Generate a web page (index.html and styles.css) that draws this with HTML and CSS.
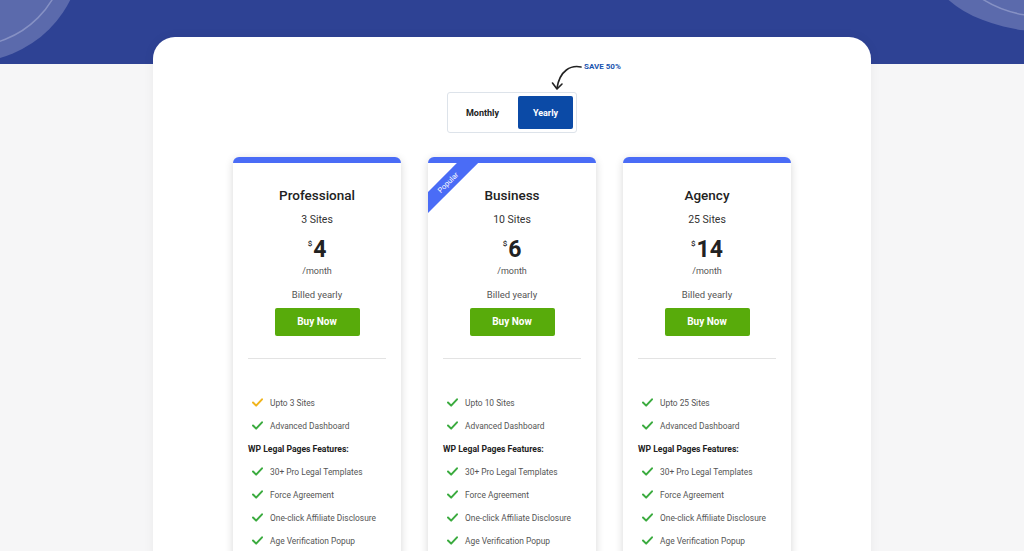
FILE: index.html
```html
<!DOCTYPE html>
<html lang="en">
<head>
  <meta charset="UTF-8">
  <title>WP Legal Pages - Pricing</title>
  <link rel="stylesheet" href="styles.css">
</head>
<body>
  <header class="hero">
    <svg class="blob blob-left" width="160" height="64" viewBox="0 0 160 64">
      <circle cx="-30" cy="-50" r="112" fill="#5b6aac"/>
      <circle cx="-30" cy="-50" r="96" fill="none" stroke="#8691c4" stroke-width="1.5"/>
    </svg>
    <svg class="blob blob-right" width="124" height="64" viewBox="0 0 124 64">
      <ellipse cx="150" cy="-40" rx="122" ry="72" fill="#5b6aac"/>
      <ellipse cx="150" cy="-48" rx="98" ry="65" fill="none" stroke="#8691c4" stroke-width="1.5"/>
    </svg>
  </header>

  <main class="panel">
    <div class="switch-wrap">
      <div class="save">
        <svg class="save-arrow" width="34" height="30" viewBox="0 0 34 30">
          <path d="M31 4 C21 2 10 7 7 25" fill="none" stroke="#222" stroke-width="1.6" stroke-linecap="round"/>
          <path d="M2.5 20 L7 26 L12 21" fill="none" stroke="#222" stroke-width="1.6" stroke-linecap="round" stroke-linejoin="round"/>
        </svg>
        <span>SAVE 50%</span>
      </div>
      <div class="switch">
        <button class="switch-btn">Monthly</button>
        <button class="switch-btn active">Yearly</button>
      </div>
    </div>

    <div class="plans">
      <div class="plan">
        <h2>Professional</h2>
        <p class="sites">3 Sites</p>
        <p class="price"><sup>$</sup>4</p>
        <p class="per">/month</p>
        <p class="billed">Billed yearly</p>
        <a class="buy" href="#">Buy Now</a>
        <hr>
        <ul class="features">
          <li><svg class="check gold" viewBox="0 0 12 10"><path d="M1 5 L4.5 8.5 L11 1.5"/></svg>Upto 3 Sites</li>
          <li><svg class="check" viewBox="0 0 12 10"><path d="M1 5 L4.5 8.5 L11 1.5"/></svg>Advanced Dashboard</li>
          <li class="group">WP Legal Pages Features:</li>
          <li><svg class="check" viewBox="0 0 12 10"><path d="M1 5 L4.5 8.5 L11 1.5"/></svg>30+ Pro Legal Templates</li>
          <li><svg class="check" viewBox="0 0 12 10"><path d="M1 5 L4.5 8.5 L11 1.5"/></svg>Force Agreement</li>
          <li><svg class="check" viewBox="0 0 12 10"><path d="M1 5 L4.5 8.5 L11 1.5"/></svg>One-click Affiliate Disclosure</li>
          <li><svg class="check" viewBox="0 0 12 10"><path d="M1 5 L4.5 8.5 L11 1.5"/></svg>Age Verification Popup</li>
        </ul>
      </div>

      <div class="plan">
        <div class="ribbon"><span>Popular</span></div>
        <h2>Business</h2>
        <p class="sites">10 Sites</p>
        <p class="price"><sup>$</sup>6</p>
        <p class="per">/month</p>
        <p class="billed">Billed yearly</p>
        <a class="buy" href="#">Buy Now</a>
        <hr>
        <ul class="features">
          <li><svg class="check" viewBox="0 0 12 10"><path d="M1 5 L4.5 8.5 L11 1.5"/></svg>Upto 10 Sites</li>
          <li><svg class="check" viewBox="0 0 12 10"><path d="M1 5 L4.5 8.5 L11 1.5"/></svg>Advanced Dashboard</li>
          <li class="group">WP Legal Pages Features:</li>
          <li><svg class="check" viewBox="0 0 12 10"><path d="M1 5 L4.5 8.5 L11 1.5"/></svg>30+ Pro Legal Templates</li>
          <li><svg class="check" viewBox="0 0 12 10"><path d="M1 5 L4.5 8.5 L11 1.5"/></svg>Force Agreement</li>
          <li><svg class="check" viewBox="0 0 12 10"><path d="M1 5 L4.5 8.5 L11 1.5"/></svg>One-click Affiliate Disclosure</li>
          <li><svg class="check" viewBox="0 0 12 10"><path d="M1 5 L4.5 8.5 L11 1.5"/></svg>Age Verification Popup</li>
        </ul>
      </div>

      <div class="plan">
        <h2>Agency</h2>
        <p class="sites">25 Sites</p>
        <p class="price"><sup>$</sup>14</p>
        <p class="per">/month</p>
        <p class="billed">Billed yearly</p>
        <a class="buy" href="#">Buy Now</a>
        <hr>
        <ul class="features">
          <li><svg class="check" viewBox="0 0 12 10"><path d="M1 5 L4.5 8.5 L11 1.5"/></svg>Upto 25 Sites</li>
          <li><svg class="check" viewBox="0 0 12 10"><path d="M1 5 L4.5 8.5 L11 1.5"/></svg>Advanced Dashboard</li>
          <li class="group">WP Legal Pages Features:</li>
          <li><svg class="check" viewBox="0 0 12 10"><path d="M1 5 L4.5 8.5 L11 1.5"/></svg>30+ Pro Legal Templates</li>
          <li><svg class="check" viewBox="0 0 12 10"><path d="M1 5 L4.5 8.5 L11 1.5"/></svg>Force Agreement</li>
          <li><svg class="check" viewBox="0 0 12 10"><path d="M1 5 L4.5 8.5 L11 1.5"/></svg>One-click Affiliate Disclosure</li>
          <li><svg class="check" viewBox="0 0 12 10"><path d="M1 5 L4.5 8.5 L11 1.5"/></svg>Age Verification Popup</li>
        </ul>
      </div>
    </div>
  </main>
</body>
</html>
```

FILE: styles.css
```css
/* Pricing page */
body {
  margin: 0;
  font-family: Roboto, "Liberation Sans", Arial, sans-serif;
  background: #f6f6f7;
  color: #222;
  overflow: hidden;
}
.hero {
  position: relative;
  height: 64px;
  background: #2e4294;
  overflow: hidden;
}
.blob {
  position: absolute;
  top: 0;
}
.blob-left { left: 0; }
.blob-right { right: 0; }

.panel {
  position: relative;
  width: 718px;
  margin: -27px auto 0;
  min-height: 560px;
  background: #fff;
  border-radius: 22px 22px 0 0;
  box-shadow: 0 0 12px rgba(0, 0, 0, 0.05);
  padding-top: 55px;
  box-sizing: border-box;
}

/* Monthly / Yearly switch */
.switch-wrap {
  position: relative;
  width: 130px;
  margin: 0 auto;
}
.switch {
  display: flex;
  align-items: center;
  height: 41px;
  padding: 3px;
  box-sizing: border-box;
  border: 1px solid #dde3ea;
  border-radius: 3px;
  background: #fff;
}
.switch-btn {
  flex: 1;
  height: 33px;
  border: none;
  background: none;
  font-family: inherit;
  font-size: 9px;
  font-weight: 700;
  color: #222;
  border-radius: 2px;
  padding: 0 4px 0 0;
}
.switch-btn.active {
  flex: 0 0 55px;
  padding: 0;
  background: #0b4aa6;
  color: #fff;
}
.save {
  position: absolute;
  left: 103px;
  top: -29px;
  display: flex;
  align-items: flex-start;
}
.save span {
  font-size: 8px;
  font-weight: 700;
  color: #1a55b0;
  margin-left: 0;
  margin-top: -1px;
  white-space: nowrap;
}

/* Plans */
.plans {
  display: flex;
  justify-content: center;
  gap: 27px;
  margin-top: 24px;
}
.plan {
  position: relative;
  width: 168px;
  background: #fff;
  border-top: 6px solid #4a6cf6;
  border-radius: 6px 6px 0 0;
  box-shadow: 0 2px 8px rgba(0, 0, 0, 0.16);
  text-align: center;
  padding: 0 15px 20px;
  box-sizing: border-box;
  overflow: hidden;
}
.plan h2 {
  margin: 24px 0 0;
  font-size: 13.5px;
  font-weight: 500;
  line-height: 17px;
}
.sites {
  margin: 9px 0 0;
  font-size: 10.5px;
  line-height: 13px;
  color: #333;
}
.price {
  margin: 5px 0 0;
  font-size: 23px;
  font-weight: 700;
  line-height: 26px;
}
.price sup {
  font-size: 8px;
  font-weight: 500;
  vertical-align: 11px;
  margin-right: 1px;
}
.per {
  margin: 3px 0 0;
  font-size: 9px;
  line-height: 11px;
  color: #555;
}
.billed {
  margin: 12px 0 0;
  font-size: 9.5px;
  line-height: 11px;
  color: #555;
}
.buy {
  display: block;
  width: 85px;
  height: 28px;
  margin: 8px auto 0;
  background: #58ab0b;
  color: #fff;
  font-size: 10px;
  font-weight: 700;
  line-height: 28px;
  text-decoration: none;
  border-radius: 2px;
}
.plan hr {
  margin: 22px 0 0;
  border: none;
  border-top: 1px solid #e3e3e3;
}
.features {
  list-style: none;
  margin: 32px 0 0;
  padding: 0 0 0 4px;
  text-align: left;
}
.features li {
  display: flex;
  align-items: center;
  height: 23px;
  font-size: 8.4px;
  color: #555;
}
.features li.group {
  margin-left: -4px;
  font-size: 8.6px;
  font-weight: 700;
  color: #222;
}
.check {
  width: 11px;
  height: 9px;
  margin-right: 7px;
  fill: none;
  stroke: #3bab3f;
  stroke-width: 2.2;
  stroke-linecap: round;
  stroke-linejoin: round;
}
.check.gold { stroke: #f0b41c; }

.ribbon {
  position: absolute;
  top: 0;
  left: 0;
  width: 60px;
  height: 60px;
  overflow: hidden;
}
.ribbon span {
  position: absolute;
  top: 12px;
  left: -20px;
  width: 80px;
  height: 15px;
  background: #4a6cf6;
  color: #fff;
  font-size: 7.5px;
  line-height: 15px;
  text-align: center;
  transform: rotate(-45deg);
}
```
